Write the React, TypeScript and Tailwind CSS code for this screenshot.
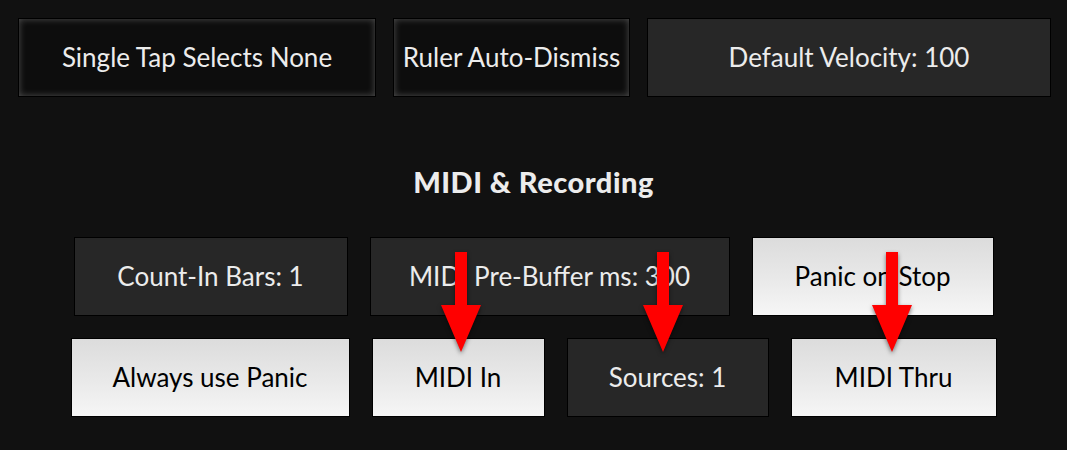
import React from "react";

type Tone = "glow" | "dark" | "light";

const toneClass: Record<Tone, string> = {
  glow: "bg-[#0d0d0d] border border-black shadow-[inset_0_0_7px_rgba(255,255,255,0.28)] text-[#ececec]",
  dark: "bg-[#272727] border border-black text-[#ececec]",
  light:
    "bg-gradient-to-b from-[#dcdcdc] via-[#e8e8e8] to-[#f6f6f6] border border-black text-black",
};

function SettingButton({ label, tone, width }: { label: string; tone: Tone; width: string }) {
  return (
    <div className={`flex h-[79px] shrink-0 items-center justify-center text-[26px] ${width} ${toneClass[tone]}`}>
      {label}
    </div>
  );
}

// red annotation arrow pointing down
function Arrow({ left }: { left: string }) {
  return (
    <svg
      className={`absolute top-[252px] ${left} h-[102px] w-[44px] drop-shadow-[0_2px_2px_rgba(0,0,0,0.5)]`}
      viewBox="0 0 44 102"
    >
      <path d="M16 0 H28 V53 H42 L22 100 L2 53 H16 Z" fill="#ff0000" />
    </svg>
  );
}

export default function App() {
  return (
    <div
      className="relative h-[450px] w-[1067px] overflow-hidden bg-[#111111]"
      style={{ fontFamily: "Lato, 'Open Sans', sans-serif" }}
    >
      <div className="flex gap-[17px] pl-[18px] pt-[18px]">
        <SettingButton label="Single Tap Selects None" tone="glow" width="w-[358px]" />
        <SettingButton label="Ruler Auto-Dismiss" tone="glow" width="w-[237px]" />
        <SettingButton label="Default Velocity: 100" tone="dark" width="w-[404px]" />
      </div>

      <div className="flex h-[140px] items-start justify-center pt-[70px]">
        <h2 className="text-[29px] font-black leading-none tracking-[0.5px] text-[#ececec]">MIDI &amp; Recording</h2>
      </div>

      <div className="flex flex-col items-center gap-[22px]">
        <div className="flex gap-[22px]">
          <SettingButton label="Count-In Bars: 1" tone="dark" width="w-[274px]" />
          <SettingButton label="MIDI Pre-Buffer ms: 300" tone="dark" width="w-[360px]" />
          <SettingButton label="Panic on Stop" tone="light" width="w-[242px]" />
        </div>
        <div className="flex gap-[22px]">
          <SettingButton label="Always use Panic" tone="light" width="w-[279px]" />
          <SettingButton label="MIDI In" tone="light" width="w-[173px]" />
          <SettingButton label="Sources: 1" tone="dark" width="w-[202px]" />
          <SettingButton label="MIDI Thru" tone="light" width="w-[206px]" />
        </div>
      </div>

      <Arrow left="left-[439px]" />
      <Arrow left="left-[641px]" />
      <Arrow left="left-[870px]" />
    </div>
  );
}
